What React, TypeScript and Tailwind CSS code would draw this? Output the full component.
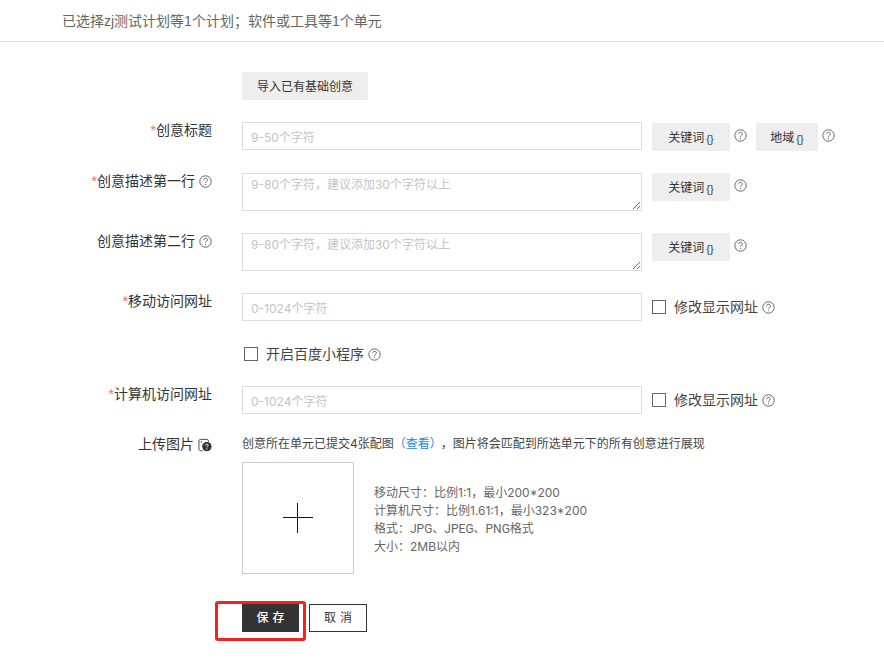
import React from 'react';

const HelpIcon = ({ className = '' }: { className?: string }) => (
  <svg viewBox="0 0 13 13" className={`w-[13px] h-[13px] shrink-0 ${className}`} fill="none">
    <circle cx="6.5" cy="6.5" r="5.7" stroke="#666" strokeWidth="1" />
    <path d="M4.6 5.1c0-1.1.8-1.8 1.9-1.8s1.9.7 1.9 1.7c0 1.3-1.9 1.4-1.9 2.8" stroke="#666" strokeWidth="1" />
    <circle cx="6.5" cy="9.6" r="0.65" fill="#666" />
  </svg>
);

const PictureHelpIcon = () => (
  <svg viewBox="0 0 15 14" className="w-[14px] h-[14px] shrink-0" fill="none">
    <path d="M5 13H2.5C1.7 13 1 12.3 1 11.5v-9C1 1.7 1.7 1 2.5 1H10c.6 0 1 .4 1 1v2" stroke="#444" strokeWidth="1" />
    <circle cx="3.6" cy="3.8" r="0.8" fill="#444" />
    <circle cx="9.5" cy="8.7" r="5" fill="#333" />
    <path d="M8 7.6c0-.8.6-1.3 1.5-1.3s1.5.5 1.5 1.2c0 1-1.5 1-1.5 2.1" stroke="#fff" strokeWidth="1" />
    <circle cx="9.5" cy="11.2" r="0.6" fill="#fff" />
  </svg>
);

const KeywordButton = ({ label, width }: { label: string; width: string }) => (
  <button className={`${width} h-[28px] bg-[#eeeeee] text-[12px] text-[#333] pt-[1px] flex items-center justify-center shrink-0`}>
    {label}
    <span className="text-[#345] text-[11px] ml-[2px] mt-[3px]">{'{}'}</span>
  </button>
);

const Label = ({ text, required, help, picture }: { text: string; required?: boolean; help?: boolean; picture?: boolean }) => (
  <div className="w-[212px] shrink-0 mr-[30px] flex justify-end items-center h-[14px] gap-[4px] text-[14px] text-[#333] mt-[1px]">
    <span>
      {required && <span className="text-[#f66]">*</span>}
      {text}
    </span>
    {help && <HelpIcon />}
    {picture && <PictureHelpIcon />}
  </div>
);

const TextInput = ({ placeholder }: { placeholder: string }) => (
  <input
    readOnly
    placeholder={placeholder}
    className="w-[400px] h-[28px] border border-[#dcdcdc] px-[8px] pt-[2px] text-[12px] font-['Inter','Noto_Sans_CJK_SC',sans-serif] placeholder:text-[#c4c4c4] outline-none shrink-0"
  />
);

const TextArea = ({ placeholder }: { placeholder: string }) => (
  <textarea
    readOnly
    placeholder={placeholder}
    className="block w-[400px] h-[38px] border border-[#dcdcdc] px-[8px] pt-[1px] pb-0 text-[12px] leading-[20px] font-['Inter','Noto_Sans_CJK_SC',sans-serif] placeholder:text-[#c4c4c4] outline-none shrink-0"
  />
);

const CheckLabel = ({ text }: { text: string }) => (
  <label className="flex items-center h-[14px] text-[14px] text-[#444]">
    <span className="w-[14px] h-[14px] border border-[#666] shrink-0 mr-[8px]" />
    {text}
    <HelpIcon className="ml-[4px]" />
  </label>
);

export default function App() {
  return (
    <div className="relative w-[884px] h-[661px] overflow-hidden bg-white font-['Liberation_Sans','Noto_Sans_CJK_SC',sans-serif]">
      <header className="h-[42px] border-b border-[#dddddd] pl-[62px] pt-[12px] text-[14px] leading-[18px] text-[#666]">
        已选择zj测试计划等1个计划；软件或工具等1个单元
      </header>

      <div className="pl-[242px] pt-[30px]">
        <button className="w-[126px] h-[28px] bg-[#eeeeee] pt-[2px] text-[12px] text-[#333]">导入已有基础创意</button>
      </div>

      <div className="flex mt-[22px] items-start">
        <Label text="创意标题" required />
        <TextInput placeholder="9-50个字符" />
        <div className="ml-[10px] mt-[1px] flex items-start">
          <KeywordButton label="关键词" width="w-[78px]" />
          <HelpIcon className="ml-[4px] mt-[6px]" />
          <span className="ml-[9px]"><KeywordButton label="地域" width="w-[62px]" /></span>
          <HelpIcon className="ml-[4px] mt-[6px]" />
        </div>
      </div>

      <div className="flex mt-[22px] items-start">
        <Label text="创意描述第一行" required help />
        <TextArea placeholder="9-80个字符，建议添加30个字符以上" />
        <div className="ml-[10px] flex items-start">
          <KeywordButton label="关键词" width="w-[78px]" />
          <HelpIcon className="ml-[4px] mt-[6px]" />
        </div>
      </div>

      <div className="flex mt-[22px] items-start">
        <Label text="创意描述第二行" help />
        <TextArea placeholder="9-80个字符，建议添加30个字符以上" />
        <div className="ml-[10px] flex items-start">
          <KeywordButton label="关键词" width="w-[78px]" />
          <HelpIcon className="ml-[4px] mt-[6px]" />
        </div>
      </div>

      <div className="flex mt-[22px] items-start">
        <Label text="移动访问网址" required />
        <TextInput placeholder="0-1024个字符" />
        <div className="ml-[10px] mt-[7px]"><CheckLabel text="修改显示网址" /></div>
      </div>

      <div className="pl-[244px] mt-[26px] h-[14px]">
        <CheckLabel text="开启百度小程序" />
      </div>

      <div className="flex mt-[25px] items-start">
        <Label text="计算机访问网址" required />
        <TextInput placeholder="0-1024个字符" />
        <div className="ml-[10px] mt-[7px]"><CheckLabel text="修改显示网址" /></div>
      </div>

      <div className="flex mt-[22px] items-center h-[16px]">
        <Label text="上传图片" picture />
        <div className="text-[12px] text-[#444] font-['Inter','Noto_Sans_CJK_SC',sans-serif]">
          创意所在单元已提交4张配图<span className="text-[#1e88e5]">（查看）</span><span className="ml-[5px]">，图片将会匹配到所选单元下的所有创意进行展现</span>
        </div>
      </div>

      <div className="flex ml-[242px] mt-[10px] items-center">
        <div className="w-[112px] h-[112px] border border-[#cccccc] flex items-center justify-center shrink-0">
          <svg viewBox="0 0 30 30" className="w-[30px] h-[30px]">
            <path d="M0 14.5h30M14.5 0v30" stroke="#111" strokeWidth="1" />
          </svg>
        </div>
        <div className="ml-[20px] pt-[4px] text-[12px] leading-[18px] text-[#666] font-['Inter','Noto_Sans_CJK_SC',sans-serif]">
          <div>移动尺寸：比例1:1，最小200*200</div>
          <div>计算机尺寸：比例1.61:1，最小323*200</div>
          <div className="font-['Roboto','Noto_Sans_CJK_SC',sans-serif]">格式：JPG、JPEG、PNG格式</div>
          <div>大小：2MB以内</div>
        </div>
      </div>

      <div className="flex ml-[242px] mt-[30px] gap-[10px]">
        <button className="w-[57px] h-[28px] bg-[#333333] text-white text-[12px] font-medium pl-[4px] tracking-[4px]">保存</button>
        <button className="w-[58px] h-[28px] border border-[#333] text-[#333] text-[12px] pl-[4px] tracking-[4px]">取消</button>
      </div>

      {/* annotation drawn over the save button */}
      <div className="absolute left-[215px] top-[601px] w-[91px] h-[40px] border-[3px] border-[#f5211c] rounded-[3px]" />
    </div>
  );
}
